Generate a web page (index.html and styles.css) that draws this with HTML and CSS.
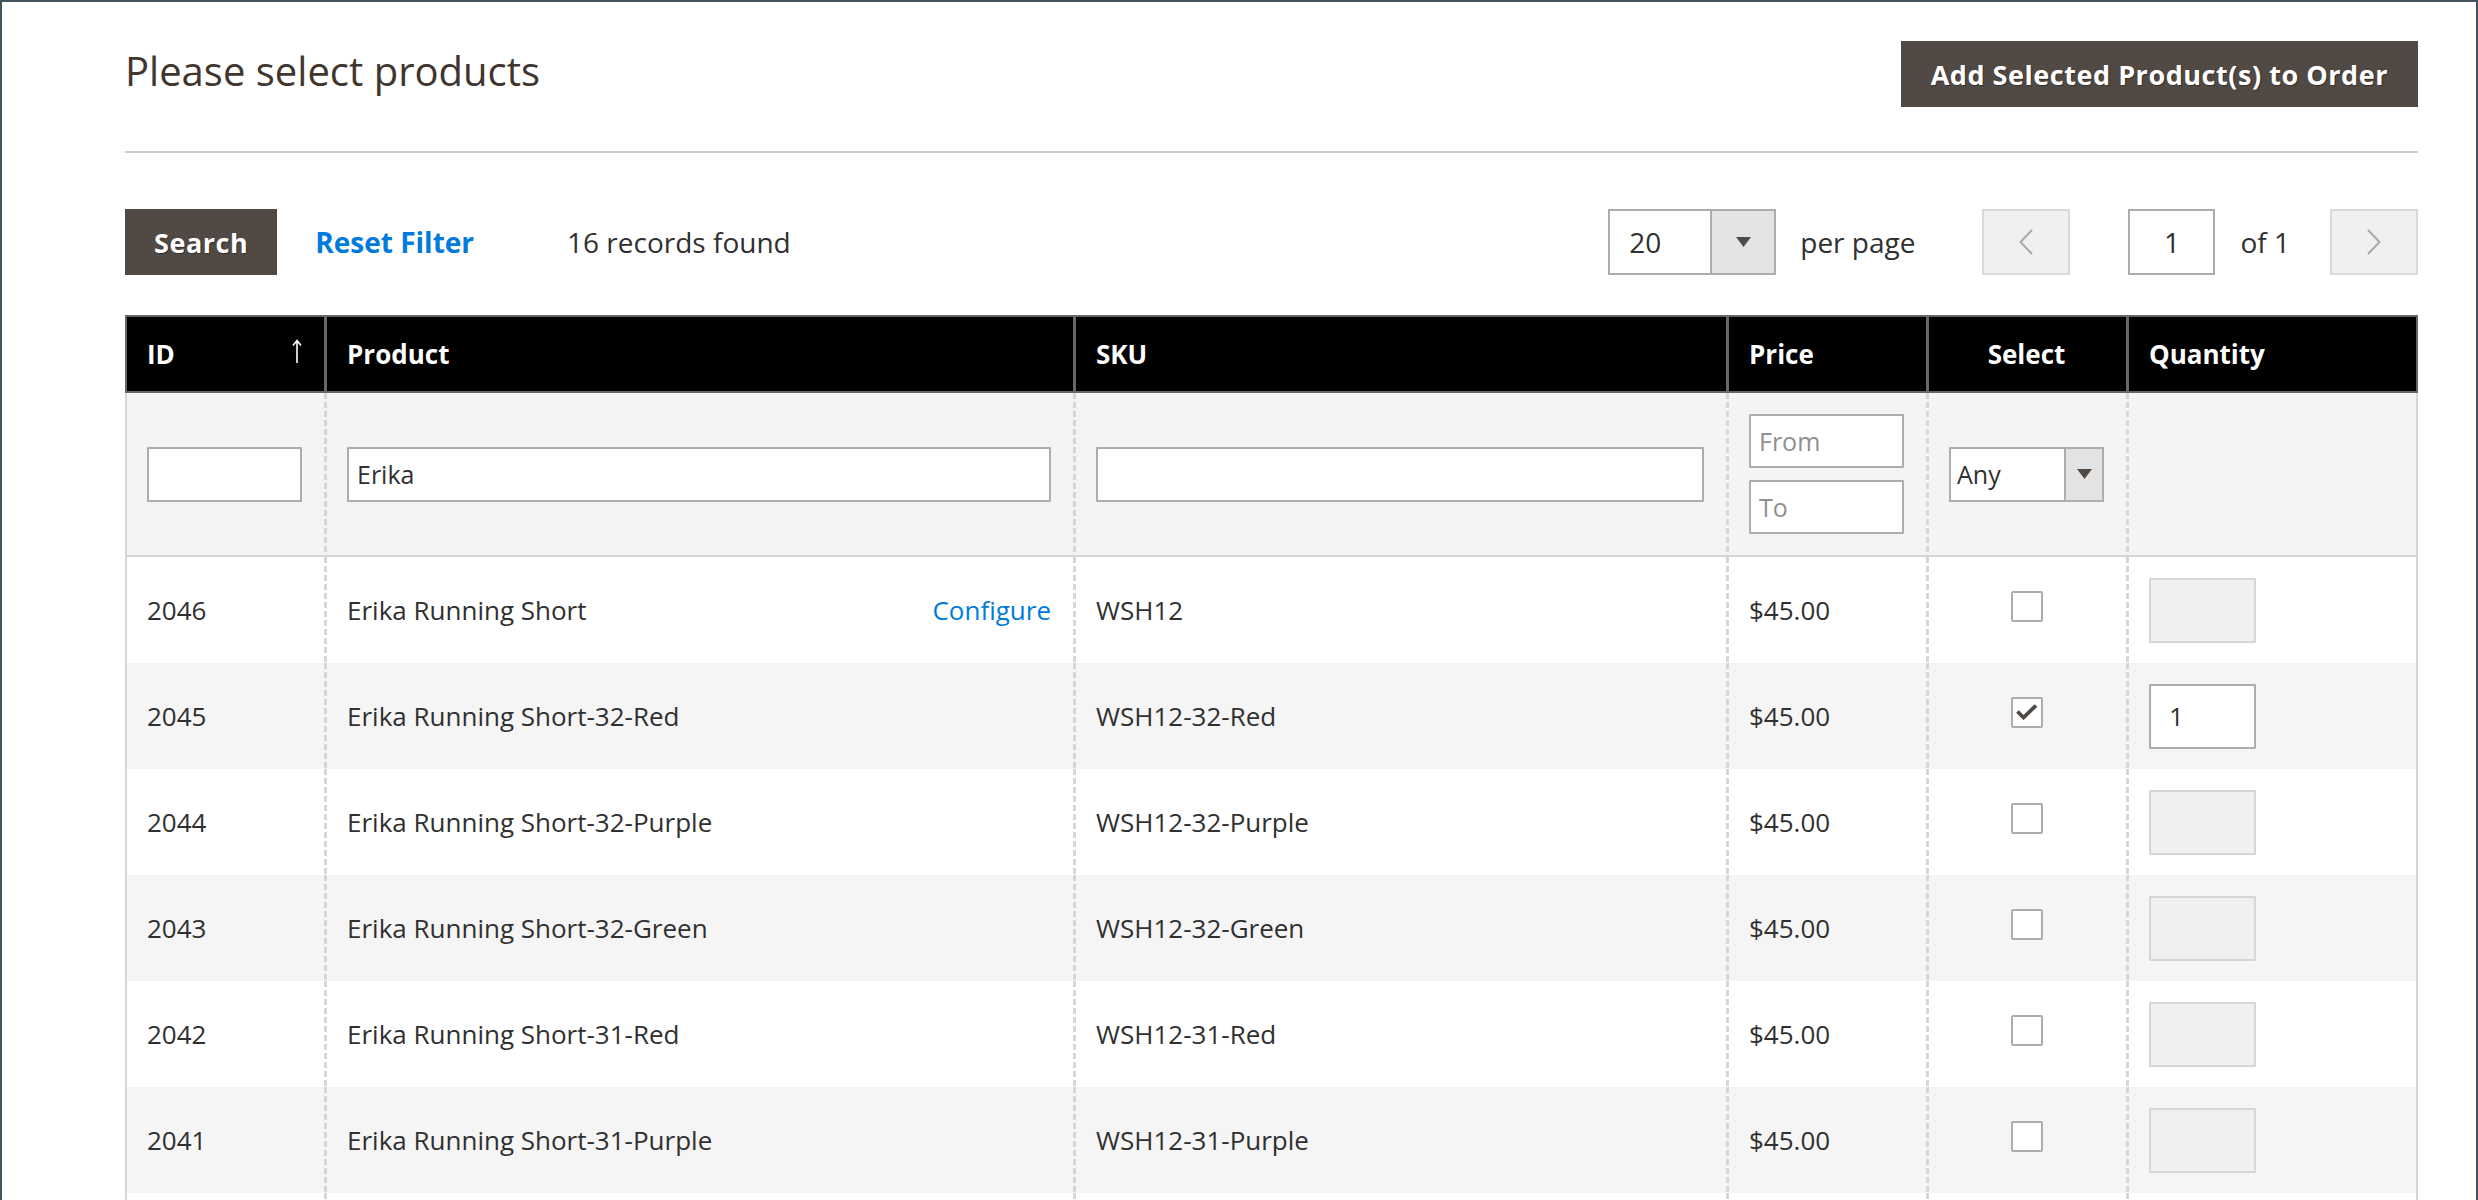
FILE: index.html
```html
<!DOCTYPE html>
<html lang="en">
<head>
<meta charset="utf-8">
<title>Please select products</title>
<link rel="stylesheet" href="styles.css">
</head>
<body>
<div class="frame">
  <header class="page-head">
    <h1 class="title">Please select products</h1>
    <button class="btn btn-add" type="button">Add Selected Product(s) to Order</button>
  </header>

  <div class="toolbar">
    <button class="btn btn-search" type="button">Search</button>
    <a class="link-reset" href="#">Reset Filter</a>
    <span class="records">16 records found</span>
    <div class="pager">
      <div class="select select-perpage">
        <span class="select-value">20</span>
        <span class="select-arrow"><svg width="15" height="10" viewBox="0 0 15 10"><polygon points="0,0 15,0 7.5,10" fill="#514943"/></svg></span>
      </div>
      <span class="perpage-label">per page</span>
      <button class="page-btn prev" type="button"><svg width="14" height="26" viewBox="0 0 14 26"><polyline points="13,1 1.5,13 13,25" fill="none" stroke="#a9a9a9" stroke-width="2"/></svg></button>
      <div class="page-input">1</div>
      <span class="page-of">of 1</span>
      <button class="page-btn next" type="button"><svg width="14" height="26" viewBox="0 0 14 26"><polyline points="1,1 12.5,13 1,25" fill="none" stroke="#a9a9a9" stroke-width="2"/></svg></button>
    </div>
  </div>

  <div class="grid">
    <div class="grid-row head">
      <div class="th th-id"><span>ID</span><svg class="sort" width="10" height="24" viewBox="0 0 10 24"><path d="M5 1.5 V24 M1 6.5 L5 1.5 L9 6.5" fill="none" stroke="#fff" stroke-width="1.6"/></svg></div>
      <div class="th">Product</div>
      <div class="th">SKU</div>
      <div class="th">Price</div>
      <div class="th th-center">Select</div>
      <div class="th">Quantity</div>
    </div>

    <div class="grid-row filters">
      <div class="td"><input class="input" type="text" value=""></div>
      <div class="td"><input class="input" type="text" value="Erika"></div>
      <div class="td"><input class="input" type="text" value=""></div>
      <div class="td td-range">
        <input class="input input-range" type="text" placeholder="From">
        <input class="input input-range" type="text" placeholder="To">
      </div>
      <div class="td">
        <div class="select select-any">
          <span class="select-value">Any</span>
          <span class="select-arrow"><svg width="15" height="10" viewBox="0 0 15 10"><polygon points="0,0 15,0 7.5,10" fill="#514943"/></svg></span>
        </div>
      </div>
      <div class="td"></div>
    </div>

    <div class="grid-row data">
      <div class="td">2046</div>
      <div class="td td-product"><span>Erika Running Short</span><a class="link-configure" href="#">Configure</a></div>
      <div class="td">WSH12</div>
      <div class="td">$45.00</div>
      <div class="td td-center"><span class="checkbox"></span></div>
      <div class="td"><span class="qty qty-disabled"></span></div>
    </div>
    <div class="grid-row data">
      <div class="td">2045</div>
      <div class="td">Erika Running Short-32-Red</div>
      <div class="td">WSH12-32-Red</div>
      <div class="td">$45.00</div>
      <div class="td td-center"><span class="checkbox checked"><svg width="22" height="16" viewBox="0 0 22 16"><path d="M1.5 7.5 L7.5 13.5 L20 1.5" fill="none" stroke="#514943" stroke-width="3.8"/></svg></span></div>
      <div class="td"><span class="qty">1</span></div>
    </div>
    <div class="grid-row data">
      <div class="td">2044</div>
      <div class="td">Erika Running Short-32-Purple</div>
      <div class="td">WSH12-32-Purple</div>
      <div class="td">$45.00</div>
      <div class="td td-center"><span class="checkbox"></span></div>
      <div class="td"><span class="qty qty-disabled"></span></div>
    </div>
    <div class="grid-row data">
      <div class="td">2043</div>
      <div class="td">Erika Running Short-32-Green</div>
      <div class="td">WSH12-32-Green</div>
      <div class="td">$45.00</div>
      <div class="td td-center"><span class="checkbox"></span></div>
      <div class="td"><span class="qty qty-disabled"></span></div>
    </div>
    <div class="grid-row data">
      <div class="td">2042</div>
      <div class="td">Erika Running Short-31-Red</div>
      <div class="td">WSH12-31-Red</div>
      <div class="td">$45.00</div>
      <div class="td td-center"><span class="checkbox"></span></div>
      <div class="td"><span class="qty qty-disabled"></span></div>
    </div>
    <div class="grid-row data">
      <div class="td">2041</div>
      <div class="td">Erika Running Short-31-Purple</div>
      <div class="td">WSH12-31-Purple</div>
      <div class="td">$45.00</div>
      <div class="td td-center"><span class="checkbox"></span></div>
      <div class="td"><span class="qty qty-disabled"></span></div>
    </div>
    <div class="grid-row data data-more" aria-hidden="true">
      <div class="td"></div>
      <div class="td"></div>
      <div class="td"></div>
      <div class="td"></div>
      <div class="td"></div>
      <div class="td"></div>
    </div>
  </div>
</div>
</body>
</html>
```

FILE: styles.css
```css
* { box-sizing: border-box; }

html, body {
  margin: 0;
  padding: 0;
  height: 100%;
}

body {
  font-family: "Open Sans", "Noto Sans", "Liberation Sans", sans-serif;
  color: #303030;
  background: #ffffff;
  overflow: hidden;
}

.frame {
  height: 1200px;
  border-top: 2px solid #41535d;
  border-left: 2px solid #41535d;
  border-right: 2px solid #41535d;
  padding: 0 58px 0 123px;
  overflow: hidden;
}

/* ---------- header ---------- */
.page-head {
  display: flex;
  justify-content: space-between;
  align-items: flex-start;
  padding: 39px 0 44px;
  border-bottom: 2px solid #cccccc;
}

.title {
  margin: 0;
  padding-top: 1px;
  font-size: 40px;
  line-height: 57px;
  font-weight: 400;
  color: #41362f;
}

.btn {
  font-family: inherit;
  margin: 0;
  border: 0;
  height: 66px;
  padding: 0 30px;
  font-size: 27px;
  font-weight: 700;
  letter-spacing: 0.02em;
  color: #ffffff;
  background: #514943;
  text-shadow: 1px 1px 1px rgba(0, 0, 0, 0.35);
  cursor: pointer;
}

.btn-search {
  padding: 0 29px;
}

/* ---------- toolbar ---------- */
.toolbar {
  display: flex;
  align-items: center;
  height: 66px;
  margin-top: 56px;
  font-size: 28px;
}

.link-reset {
  margin-left: 38px;
  color: #007bdb;
  font-weight: 700;
  text-decoration: none;
}

.records {
  margin-left: 93px;
}

.pager {
  margin-left: auto;
  display: flex;
  align-items: center;
  height: 66px;
}

.select {
  display: flex;
  border: 2px solid #adadad;
  background: #ffffff;
}

.select-value {
  flex: 1;
  display: flex;
  align-items: center;
  color: #303030;
}

.select-arrow {
  display: flex;
  align-items: center;
  justify-content: center;
  border-left: 2px solid #adadad;
  background: #e3e3e3;
}

.select-perpage {
  width: 168px;
  height: 66px;
}

.select-perpage .select-value {
  padding-left: 19px;
}

.select-perpage .select-arrow {
  width: 64px;
}

.perpage-label {
  margin-left: 24px;
}

.page-btn {
  width: 88px;
  height: 66px;
  padding: 0;
  margin: 0;
  border: 2px solid #d9d9d9;
  background: #f0f0f0;
  display: flex;
  align-items: center;
  justify-content: center;
}

.prev {
  margin-left: 67px;
}

.page-input {
  margin-left: 58px;
  width: 87px;
  height: 66px;
  border: 2px solid #adadad;
  background: #ffffff;
  display: flex;
  align-items: center;
  justify-content: center;
}

.page-of {
  margin-left: 25px;
}

.next {
  margin-left: 40px;
}

/* ---------- grid ---------- */
.grid {
  margin-top: 40px;
}

.grid-row {
  display: grid;
  grid-template-columns: 199px 749px 653px 200px 200px 292px;
}

.th {
  height: 78px;
  background: #000000;
  color: #ffffff;
  font-size: 26px;
  font-weight: 700;
  border-top: 2px solid #666666;
  border-bottom: 2px solid #666666;
  border-left: 3px solid #666666;
  padding: 0 22px 0 20px;
  display: flex;
  align-items: center;
}

.th:first-child {
  border-left-width: 2px;
}

.th:last-child {
  border-right: 2px solid #666666;
}

.th-id {
  justify-content: space-between;
}

.sort {
  margin-bottom: 6px;
}

.th-center {
  justify-content: center;
}

.td {
  font-size: 26px;
  display: flex;
  align-items: center;
  padding: 0 22px 0 20px;
  border-left: 3px solid transparent;
  background-image: repeating-linear-gradient(to bottom, #d6d6d6 0, #d6d6d6 6px, transparent 6px, transparent 9px);
  background-size: 3px 100%;
  background-repeat: no-repeat;
  background-origin: border-box;
  background-position: left top;
}

.td:first-child {
  border-left: 2px solid #d6d6d6;
  background-image: none;
}

.td:last-child {
  border-right: 2px solid #d6d6d6;
}

.filters {
  background: #f4f4f4;
  border-bottom: 2px solid #d6d6d6;
}

.filters .td {
  padding-top: 21px;
  padding-bottom: 21px;
}

.input {
  display: block;
  width: 100%;
  height: 55px;
  margin: 0;
  padding: 0 8px;
  border: 2px solid #adadad;
  border-radius: 1px;
  background: #ffffff;
  font-family: inherit;
  font-size: 25px;
  color: #303030;
  outline: none;
}

.input::placeholder {
  color: #8f8f8f;
  opacity: 1;
}

.td-range {
  flex-direction: column;
  justify-content: center;
  gap: 12px;
}

.input-range {
  height: 54px;
}

.select-any {
  width: 100%;
  height: 55px;
  font-size: 25px;
}

.select-any .select-value {
  padding-left: 6px;
}

.select-any .select-arrow {
  width: 38px;
}

.data {
  height: 106px;
}

.data:nth-child(even) {
  background: #f5f5f5;
}

.td-product {
  justify-content: space-between;
}

.link-configure {
  color: #007bdb;
  text-decoration: none;
}

.td-center {
  justify-content: center;
}

.checkbox {
  width: 32px;
  height: 31px;
  margin-bottom: 8px;
  border: 2px solid #adadad;
  border-radius: 2px;
  background: #ffffff;
  display: flex;
  align-items: center;
  justify-content: center;
}

.qty {
  width: 107px;
  height: 65px;
  border: 2px solid #adadad;
  border-radius: 1px;
  background: #ffffff;
  display: flex;
  align-items: center;
  padding-left: 18px;
  font-size: 26px;
}

.qty-disabled {
  background: #f0f0f0;
  border-color: #d6d6d6;
}
```
